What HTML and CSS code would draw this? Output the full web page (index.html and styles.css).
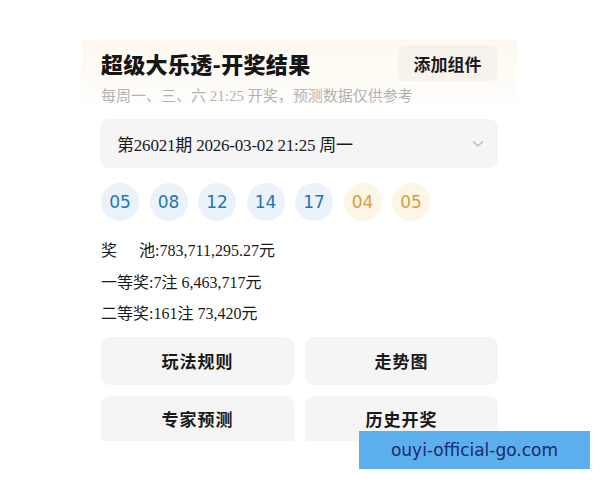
FILE: index.html
```html
<!DOCTYPE html>
<html lang="zh-CN">
<head>
<meta charset="utf-8">
<title>超级大乐透-开奖结果</title>
<link rel="stylesheet" href="styles.css">
</head>
<body>
<div class="page">
  <header class="head">
    <div class="head-row">
      <h1 class="title">超级大乐透-开奖结果</h1>
      <button class="add-btn">添加组件</button>
    </div>
    <p class="sub">每周一、三、六 21:25 开奖，预测数据仅供参考</p>
  </header>
  <main class="content">
    <div class="period">
      <span class="period-text">第26021期 2026-03-02 21:25 周一</span>
      <svg class="chev" width="12" height="8" viewBox="0 0 12 8"><path d="M1 1.5 L6 6 L11 1.5" fill="none" stroke="#b5b5b5" stroke-width="1.3"/></svg>
    </div>
    <div class="balls">
      <span class="ball red">05</span>
      <span class="ball red">08</span>
      <span class="ball red">12</span>
      <span class="ball red">14</span>
      <span class="ball red">17</span>
      <span class="ball blue">04</span>
      <span class="ball blue">05</span>
    </div>
    <div class="prizes">
      <div class="prize"><span class="lbl pool">奖<span class="sp"></span>池</span>:783,711,295.27元</div>
      <div class="prize"><span class="lbl">一等奖</span>:7注 6,463,717元</div>
      <div class="prize"><span class="lbl">二等奖</span>:161注 73,420元</div>
    </div>
    <div class="grid">
      <div class="tile">玩法规则</div>
      <div class="tile">走势图</div>
      <div class="tile short">专家预测</div>
      <div class="tile short">历史开奖</div>
    </div>
  </main>
  <div class="watermark">ouyi-official-go.com</div>
</div>
</body>
</html>
```

FILE: styles.css
```css
html, body {
  margin: 0;
  padding: 0;
  background: #ffffff;
}
body {
  font-family: "Liberation Serif", "Noto Sans CJK SC", serif;
  color: #1c1c1c;
}
.page {
  width: 600px;
  height: 480px;
  position: relative;
  overflow: hidden;
  padding-top: 40px;
  box-sizing: border-box;
}
.head {
  margin-left: 81px;
  width: 436px;
  box-sizing: border-box;
  padding: 5px 20px 8px 20px;
  background: linear-gradient(180deg, #fdf9f0 0%, #fefcf7 60%, #ffffff 100%);
}
.head-row {
  display: flex;
  justify-content: space-between;
  align-items: center;
}
.title {
  margin: 0;
  font-family: "Noto Sans CJK SC", sans-serif;
  font-weight: 900;
  font-size: 22px;
  line-height: 34px;
  letter-spacing: 0.3px;
  color: #161616;
}
.add-btn {
  border: none;
  background: #f6f2ec;
  width: 99px;
  height: 36px;
  border-radius: 6px;
  font-family: "Noto Sans CJK SC", sans-serif;
  font-weight: 700;
  font-size: 17px;
  color: #1c1c1c;
  padding: 0;
}
.sub {
  margin: 6px 0 0 0;
  font-family: "Liberation Serif", "Noto Sans CJK SC", serif;
  font-size: 15px;
  line-height: 18px;
  color: #b2b2b2;
}
.content {
  margin-left: 100px;
  width: 398px;
  padding-top: 6px;
}
.period {
  height: 49px;
  background: #f5f5f5;
  border-radius: 9px;
  display: flex;
  align-items: center;
  justify-content: space-between;
  padding: 0 14px 0 17px;
}
.period-text {
  font-size: 17px;
  color: #1a1a1a;
  letter-spacing: -0.2px;
}
.balls {
  display: flex;
  gap: 10.5px;
  margin-top: 15px;
  padding-left: 1px;
}
.ball {
  width: 38px;
  height: 38px;
  border-radius: 50%;
  display: flex;
  align-items: center;
  justify-content: center;
  font-family: "DejaVu Sans", sans-serif;
  font-size: 17px;
}
.ball.red {
  background: #eaf2fb;
  color: #2676b0;
}
.ball.blue {
  background: #fdf6e6;
  color: #d4a040;
}
.prizes {
  margin-top: 13px;
  padding-left: 1px;
}
.prize {
  font-size: 16px;
  height: 31.5px;
  line-height: 31.5px;
  color: #1a1a1a;
}
.lbl {
  font-family: "Noto Sans CJK SC", sans-serif;
}
.sp {
  display: inline-block;
  width: 22px;
}
.grid {
  margin-top: 8px;
  padding-left: 1px;
  display: grid;
  grid-template-columns: 193px 193px;
  column-gap: 11px;
  row-gap: 11px;
}
.tile {
  height: 48px;
  background: #f5f5f5;
  border-radius: 9px;
  display: flex;
  align-items: center;
  justify-content: center;
  font-family: "Noto Sans CJK SC", sans-serif;
  font-weight: 700;
  font-size: 17px;
  color: #1a1a1a;
  letter-spacing: 1px;
}
.tile.short {
  height: 45px;
  border-radius: 9px 9px 0 0;
}
.watermark {
  position: absolute;
  left: 359px;
  top: 431px;
  width: 231px;
  height: 38px;
  background: #5aafec;
  color: #1b2a6b;
  font-family: "DejaVu Sans", sans-serif;
  font-size: 17px;
  display: flex;
  align-items: center;
  justify-content: center;
}
```
